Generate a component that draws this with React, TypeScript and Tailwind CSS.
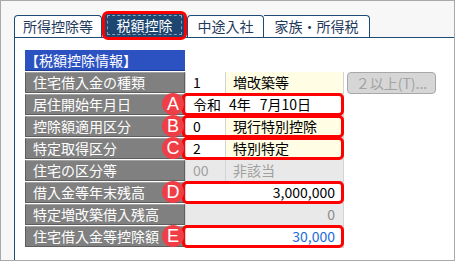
import React from 'react';

const Badge = ({ letter }: { letter: string }) => (
  <div className="absolute left-[137px] top-[-1px] z-20 w-[22px] h-[22px] rounded-full bg-[#ef3e46] text-white text-[18px] leading-[22px] text-center font-['Liberation_Sans',sans-serif]">
    {letter}
  </div>
);

const Outline = () => (
  <div className="absolute left-[157px] top-[-1px] z-10 w-[162px] h-[23px] border-[3px] border-[#ff0000] rounded-[5px] pointer-events-none" />
);

const Label = ({ children }: { children: React.ReactNode }) => (
  <div className="w-[160px] h-[21px] bg-[#808080] border border-[#5e5e5e] border-t-[#a2a2a2] text-white text-[14px] leading-[19px] pl-[7px] whitespace-nowrap">
    {children}
  </div>
);

export default function App() {
  return (
    <div className="w-[455px] h-[261px] border border-[#a9a9a9] bg-[#f7f7f7] flex flex-col font-['Noto_Sans_CJK_JP',sans-serif]">
      <div className="h-[36px] flex items-end pl-[13px] text-[14px] text-[#1f3a5c]">
        <div className="w-[88px] h-[22px] bg-white border border-b-0 border-[#1f4a73] rounded-t-[4px] text-center leading-[21px]">
          所得控除等
        </div>
        <div className="relative ml-[3px] w-[79px] h-[24px] bg-[#1d4670] rounded-t-[3px] p-[2px]">
          <div className="w-full h-full border border-dashed border-[#8aa0b8] text-white text-center leading-[18px]">
            税額控除
          </div>
          <div className="absolute -left-[3px] -top-[2px] w-[85px] h-[29px] border-[3px] border-[#ff0000] rounded-[6px]" />
        </div>
        <div className="ml-[3px] w-[77px] h-[22px] bg-white border border-b-0 border-[#1f4a73] rounded-t-[4px] text-center leading-[21px]">
          中途入社
        </div>
        <div className="w-[106px] h-[22px] bg-white border border-b-0 border-l-0 border-[#1f4a73] rounded-tr-[4px] text-center leading-[21px]">
          家族・所得税
        </div>
      </div>
      <div className="flex-1 ml-[13px] border-l border-t border-[#1f4a73] bg-white pl-[10px] pt-[12px] text-[14px]">
        <div className="flex flex-col w-[412px]">
          <div className="flex h-[22px]">
            <div className="w-[160px] h-[21px] bg-[#2c52c2] border-b border-[#1c3a90] text-white leading-[20px] whitespace-nowrap">
              【税額控除情報】
            </div>
          </div>

          <div className="flex h-[22px]">
            <Label>住宅借入金の種類</Label>
            <div className="w-[40px] h-[22px] border-l border-b border-[#d4d4d4] bg-white pl-[7px] leading-[21px]">1</div>
            <div className="w-[119px] h-[22px] border-l border-b border-r border-[#d4d4d4] bg-[#fffde3] pl-[7px] leading-[21px]">増改築等</div>
            <div className="ml-[3px] w-[89px] h-[22px] bg-[#d6d6d6] border border-[#a8a8a8] rounded-[4px] text-[#a3a3a3] text-center leading-[20px] whitespace-nowrap">
              ２以上(T)...
            </div>
          </div>

          <div className="relative flex h-[22px]">
            <Label>居住開始年月日</Label>
            <div className="w-[159px] h-[22px] border-l border-b border-r border-[#d4d4d4] bg-white pl-[7px] leading-[21px] whitespace-nowrap">
              <span>令和</span>
              <span className="ml-[8px]">4年</span>
              <span className="ml-[9px]">7月10日</span>
            </div>
            <Outline />
            <Badge letter="A" />
          </div>

          <div className="relative flex h-[22px]">
            <Label>控除額適用区分</Label>
            <div className="w-[40px] h-[22px] border-l border-b border-[#d4d4d4] bg-white pl-[7px] leading-[21px]">0</div>
            <div className="w-[119px] h-[22px] border-l border-b border-r border-[#d4d4d4] bg-[#fffde3] pl-[7px] leading-[21px]">現行特別控除</div>
            <Outline />
            <Badge letter="B" />
          </div>

          <div className="relative flex h-[22px]">
            <Label>特定取得区分</Label>
            <div className="w-[40px] h-[22px] border-l border-b border-[#d4d4d4] bg-white pl-[7px] leading-[21px]">2</div>
            <div className="w-[119px] h-[22px] border-l border-b border-r border-[#d4d4d4] bg-[#fffde3] pl-[7px] leading-[21px]">特別特定</div>
            <Outline />
            <Badge letter="C" />
          </div>

          <div className="flex h-[22px]">
            <Label>住宅の区分等</Label>
            <div className="w-[40px] h-[22px] border-l border-b border-[#d4d4d4] bg-[#e9e9e9] pl-[7px] leading-[21px] text-[#a0a0a0]">00</div>
            <div className="w-[119px] h-[22px] border-l border-b border-r border-[#d4d4d4] bg-[#e9e9e9] pl-[7px] leading-[21px] text-[#a0a0a0]">非該当</div>
          </div>

          <div className="relative flex h-[22px]">
            <Label>借入金等年末残高</Label>
            <div className="w-[159px] h-[22px] border-l border-b border-r border-[#d4d4d4] bg-white pr-[8px] text-right leading-[21px]">3,000,000</div>
            <Outline />
            <Badge letter="D" />
          </div>

          <div className="flex h-[22px]">
            <Label>特定増改築借入残高</Label>
            <div className="w-[159px] h-[22px] border-l border-b border-r border-[#d4d4d4] bg-[#e9e9e9] pr-[8px] text-right leading-[21px] text-[#8c8c8c]">0</div>
          </div>

          <div className="relative flex h-[22px]">
            <Label>住宅借入金等控除額</Label>
            <div className="w-[159px] h-[22px] border-l border-b border-r border-[#d4d4d4] bg-white pr-[8px] text-right leading-[21px] text-[#1d6ad8]">30,000</div>
            <Outline />
            <Badge letter="E" />
          </div>
        </div>
      </div>
    </div>
  );
}
